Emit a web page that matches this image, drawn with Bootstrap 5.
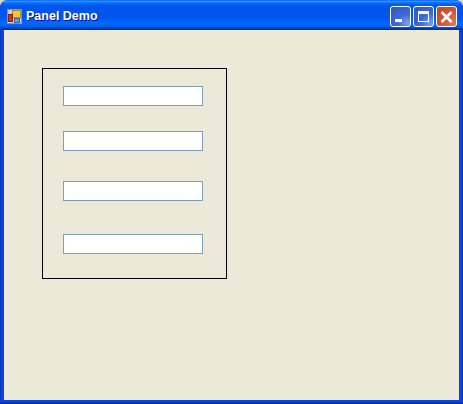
<!DOCTYPE html>
<html lang="en">
<head>
    <meta charset="UTF-8">
    <meta name="viewport" content="width=device-width, initial-scale=1.0">
    <title>Panel Demo</title>
    <link rel="stylesheet" href="https://cdn.jsdelivr.net/npm/bootstrap@5.3.0/dist/css/bootstrap.min.css">
    <style>
        html, body { margin: 0; height: 100%; overflow: hidden; background: #d8d4c4; }
        .win-frame { width: 463px; height: 404px; border-radius: 8px 8px 0 0; background: linear-gradient(to right, #0831b8 0, #0831b8 1px, #0048ea 1px, #0048ea 462px, #0831b8 462px); overflow: hidden; }
        .win-title {
            height: 30px; padding: 0 6px 0 7px;
            background: linear-gradient(to bottom, #0058ee 0%, #3593ff 4%, #288eff 6%, #127dff 8%, #036ffc 10%, #0262f2 14%, #0057ec 20%, #0054ea 24%, #0055f0 56%, #005bf8 66%, #026afe 76%, #0062f2 86%, #0052dc 92%, #0040b4 94%, #003092 100%);
        }
        .win-icon { margin-top: 3px; margin-right: 4px; }
        .win-name { font: bold 12.5px/1 "Liberation Sans", Tahoma, sans-serif; color: #fff; text-shadow: 1px 1px 0 #0f1089; margin-top: 3px; }
        .win-btn { width: 21px; height: 21px; border: 1px solid #fff; border-radius: 3px; padding: 0; background: radial-gradient(circle at 85% 85%, #7d9df0 0%, #3f69da 40%, #2a55d0 100%); }
        .win-btn.shut { background: radial-gradient(circle at 85% 85%, #e0785a 0%, #d8553a 45%, #c4402a 100%); }
        .win-btn svg { display: block; }
        .win-btns { gap: 2px; margin-top: 3px; }
        .win-body { margin: 0 4px; height: 370px; background: #ece9d8; padding: 38px 0 0 38px; }
        .win-foot { height: 4px; background: linear-gradient(to bottom, #0048ea 0, #0048ea 2px, #0838c0 2px, #0831a8 100%); }
        .group-box { width: 185px; height: 211px; border: 1px solid #000; padding: 17px 0 0 20px; }
        .text-field { width: 140px; height: 20px; background: #fff; border: 1px solid #7f9db9; display: block; padding: 0; border-radius: 0; }
        .gap-a { margin-top: 25px; }
        .gap-b { margin-top: 30px; }
        .gap-c { margin-top: 33px; }
    </style>
</head>
<body>
    <div class="win-frame d-flex flex-column">
        <div class="win-title d-flex align-items-center flex-shrink-0">
            <svg width="15" height="15" viewBox="0 0 15 15" class="win-icon">
                <rect x="0.5" y="0.5" width="14" height="14" fill="#d4d0c0" stroke="#9a9688"/>
                <rect x="5.5" y="1.5" width="8" height="7" fill="#f8c830" stroke="#b08a20"/>
                <rect x="1.5" y="5.5" width="4" height="7" fill="#d8301c" stroke="#8a2010"/>
                <rect x="7.5" y="9.5" width="5" height="4" fill="#6c98dc" stroke="#3c64a4"/>
            </svg>
            <span class="win-name flex-grow-1">Panel Demo</span>
            <div class="win-btns d-flex">
                <button class="win-btn" type="button" aria-label="Minimize">
                    <svg width="19" height="19" viewBox="0 0 19 19"><rect x="4" y="12" width="7" height="3" fill="#fff"/></svg>
                </button>
                <button class="win-btn" type="button" aria-label="Maximize">
                    <svg width="19" height="19" viewBox="0 0 19 19"><rect x="4.5" y="4.5" width="10" height="10" fill="none" stroke="#fff"/><rect x="4" y="4" width="11" height="3" fill="#fff"/></svg>
                </button>
                <button class="win-btn shut" type="button" aria-label="Close">
                    <svg width="19" height="19" viewBox="0 0 19 19"><path d="M4.5 5l10 10M14.5 5l-10 10" stroke="#fff" stroke-width="2.6" fill="none"/></svg>
                </button>
            </div>
        </div>
        <div class="win-body">
            <div class="group-box">
                <input type="text" class="text-field">
                <input type="text" class="text-field gap-a">
                <input type="text" class="text-field gap-b">
                <input type="text" class="text-field gap-c">
            </div>
        </div>
        <div class="win-foot"></div>
    </div>
    <script src="https://cdn.jsdelivr.net/npm/bootstrap@5.3.0/dist/js/bootstrap.bundle.min.js"></script>
</body>
</html>
